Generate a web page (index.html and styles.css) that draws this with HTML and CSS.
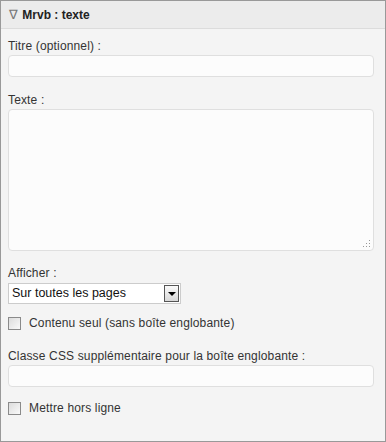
FILE: index.html
```html
<!DOCTYPE html>
<html>
<head>
    <title>Mrvb : texte</title>
    <meta charset="utf-8">
    <link rel="stylesheet" href="styles.css">
</head>
<body>
<div class="widget">
    <div class="widget-top">
        <span class="toggle">&#8711;</span> Mrvb : texte
    </div>
    <div class="widget-inside">
        <p class="field">
            <label>Titre (optionnel) :</label>
            <input type="text" class="text-input">
        </p>
        <p class="field">
            <label>Texte :</label>
            <span class="area-wrap">
                <textarea class="text-area"></textarea>
                <span class="grip"></span>
            </span>
        </p>
        <p class="field field-select">
            <label>Afficher :</label>
            <span class="select">
                <span class="select-value">Sur toutes les pages</span>
                <span class="select-btn"><span class="arrow"></span></span>
            </span>
        </p>
        <p class="check">
            <span class="box"></span>
            <span>Contenu seul (sans boîte englobante)</span>
        </p>
        <p class="field field-css">
            <label>Classe CSS supplémentaire pour la boîte englobante :</label>
            <input type="text" class="text-input">
        </p>
        <p class="check">
            <span class="box"></span>
            <span>Mettre hors ligne</span>
        </p>
    </div>
</div>
</body>
</html>
```

FILE: styles.css
```css
body {
    margin: 0;
    font: 12px "Liberation Sans", Arial, sans-serif;
    color: #333;
}

.widget {
    width: 384px;
    height: 440px;
    border: 1px solid #999;
    background: #f4f4f4;
}

.widget-top {
    height: 27px;
    line-height: 27px;
    padding-left: 8px;
    background: #ececec;
    border-bottom: 1px solid #dcdcdc;
    font-weight: bold;
    color: #222;
}

.toggle {
    font-weight: normal;
    color: #777;
    font-size: 13px;
    margin-right: 1px;
}

.widget-inside {
    padding: 10px 10px 0 7px;
    letter-spacing: 0.15px;
}

.field {
    margin: 0 0 16px;
}

.field label {
    display: block;
    line-height: 14px;
    margin-bottom: 2px;
    color: #333;
}

.field-select {
    margin-top: -1px;
    margin-bottom: 0;
}

.field-css {
    margin-top: 19px;
    margin-bottom: 0;
}

.text-input {
    display: block;
    box-sizing: border-box;
    width: 366px;
    height: 22px;
    margin: 0;
    border: 1px solid #dfdfdf;
    border-radius: 4px;
    background: #fcfcfc;
}

.area-wrap {
    display: block;
    position: relative;
    width: 366px;
    height: 142px;
}

.text-area {
    display: block;
    box-sizing: border-box;
    width: 366px;
    height: 142px;
    margin: 0;
    border: 1px solid #dfdfdf;
    border-radius: 4px;
    background: #fcfcfc;
    resize: none;
}

.grip {
    position: absolute;
    right: 4px;
    bottom: 4px;
    width: 8px;
    height: 8px;
    background:
        radial-gradient(circle, #999 0.6px, transparent 0.9px) 0 0 / 3px 3px;
    clip-path: polygon(100% 0, 100% 100%, 0 100%);
}

.select {
    display: flex;
    width: 173px;
    height: 21px;
    box-sizing: border-box;
    border: 1px solid #ccc;
    background: #fff;
    font: 12.5px "Liberation Sans", Arial, sans-serif;
    letter-spacing: 0;
    color: #111;
    margin-top: 3px;
}

.select-value {
    flex: 1;
    line-height: 19px;
    padding-left: 3px;
}

.select-btn {
    width: 15px;
    height: 17px;
    margin: 1px;
    border: 1px solid #555;
    box-sizing: border-box;
    background: linear-gradient(#fafafa, #d8d8d8);
    display: flex;
    align-items: center;
    justify-content: center;
}

.arrow {
    width: 0;
    height: 0;
    border-left: 4px solid transparent;
    border-right: 4px solid transparent;
    border-top: 4px solid #000;
}

.check {
    display: flex;
    align-items: center;
    margin: 12px 0 0;
    height: 14px;
}

.check:last-child {
    margin-top: 14px;
}

.box {
    width: 11px;
    height: 11px;
    border: 1px solid #8a8a8a;
    background: linear-gradient(135deg, #dcdcdc, #fafafa);
    margin-right: 8px;
}
```
